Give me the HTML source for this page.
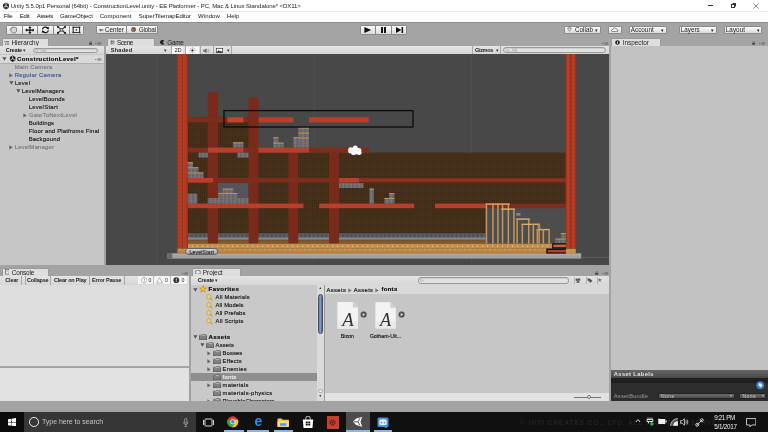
<!DOCTYPE html>
<html><head><meta charset="utf-8"><title>Unity</title>
<style>
html,body{margin:0;padding:0;background:#a2a2a2;overflow:hidden}
#root{filter:opacity(1);position:relative;width:768px;height:432px;overflow:hidden;background:#a3a3a3;font-family:"Liberation Sans",sans-serif}
#root div,#root span.t,#root svg{position:absolute;box-sizing:border-box}
#root span.t{white-space:nowrap;display:block}
</style></head><body><div id="root">
<div style="left:0px;top:0px;width:768px;height:21.6px;background:#fff;"></div>
<div style="left:0px;top:11.4px;width:768px;height:0.5px;background:#ececec;"></div>
<svg style="left:1.5px;top:1.8px" width="8" height="8" viewBox="0 0 16 16"><path d="M8 1 L14 4.5 V11.5 L8 15 L2 11.5 V4.5 Z" fill="#333"/><path d="M8 8 L8 2.5 M8 8 L13 10.8 M8 8 L3 10.8" stroke="#fff" stroke-width="1.6" fill="none"/></svg>
<span class="t" style="left:10.8px;top:2.50px;font-size:6px;line-height:7.20px;color:#222;font-weight:400;letter-spacing:-0.068px;">Unity 5.5.0p1 Personal (64bit) - ConstructionLevel.unity - EE Platformer - PC, Mac &amp; Linux Standalone* &lt;DX11&gt;</span>
<div style="left:708px;top:5.4px;width:5px;height:0.6px;background:#333;"></div>
<div style="left:730.5px;top:3.6px;width:4.2px;height:4.2px;background:transparent;border:0.6px solid #333"></div>
<div style="left:731.6px;top:2.8px;width:4.2px;height:4.2px;background:transparent;border:0.6px solid #333;border-left-color:transparent;border-bottom-color:transparent"></div>
<svg style="left:752.5px;top:2.6px" width="6" height="6" viewBox="0 0 6 6"><path d="M0.4 0.4 L5.6 5.6 M5.6 0.4 L0.4 5.6" stroke="#333" stroke-width="0.6"/></svg>
<span class="t" style="left:3.7px;top:13.00px;font-size:6px;line-height:7.20px;color:#111;font-weight:400;letter-spacing:-0.217px;">File</span>
<span class="t" style="left:19.7px;top:13.00px;font-size:6px;line-height:7.20px;color:#111;font-weight:400;letter-spacing:-0.085px;">Edit</span>
<span class="t" style="left:36.7px;top:13.00px;font-size:6px;line-height:7.20px;color:#111;font-weight:400;letter-spacing:-0.284px;">Assets</span>
<span class="t" style="left:60px;top:13.00px;font-size:6px;line-height:7.20px;color:#111;font-weight:400;letter-spacing:-0.088px;">GameObject</span>
<span class="t" style="left:99.7px;top:13.00px;font-size:6px;line-height:7.20px;color:#111;font-weight:400;letter-spacing:0.087px;">Component</span>
<span class="t" style="left:138.8px;top:13.00px;font-size:6px;line-height:7.20px;color:#111;font-weight:400;letter-spacing:-0.033px;">SuperTilemapEditor</span>
<span class="t" style="left:198px;top:13.00px;font-size:6px;line-height:7.20px;color:#111;font-weight:400;letter-spacing:0.110px;">Window</span>
<span class="t" style="left:226.8px;top:13.00px;font-size:6px;line-height:7.20px;color:#111;font-weight:400;letter-spacing:0.040px;">Help</span>
<div style="left:0px;top:21.6px;width:768px;height:24.6px;background:#a4a4a4;"></div>
<div style="left:0px;top:21.6px;width:768px;height:0.6px;background:#8e8e8e;"></div>
<div style="left:5.8px;top:25px;width:78.6px;height:9.6px;background:linear-gradient(#fbfbfb,#dcdcdc);border:0.5px solid #8a8a8a;border-radius:1.5px;"></div>
<div style="left:21.5px;top:25.4px;width:0.5px;height:8.8px;background:#8a8a8a;"></div>
<div style="left:37.199999999999996px;top:25.4px;width:0.5px;height:8.8px;background:#8a8a8a;"></div>
<div style="left:52.89999999999999px;top:25.4px;width:0.5px;height:8.8px;background:#8a8a8a;"></div>
<div style="left:68.6px;top:25.4px;width:0.5px;height:8.8px;background:#8a8a8a;"></div>
<svg style="left:9.2px;top:26px" width="9" height="8" viewBox="0 0 16 15"><path d="M3 8 C1 6 2 4.5 4 6 L4.5 3 C5 1.5 6.5 1.5 7 3 C7.5 1 9.5 1 10 3 C10.8 1.8 12.3 2 12.5 3.5 C13.5 3 14.5 4 14 6 L13 11 C12 14 5 14 4 11 Z" fill="#d8d8d8" stroke="#666" stroke-width="1.5"/></svg>
<svg style="left:24.6px;top:25.9px" width="9.8" height="8.2" viewBox="0 0 12 10"><path d="M6 0 L8 2.4 H6.7 V4.3 H9.4 V3 L12 5 L9.4 7 V5.7 H6.7 V7.6 H8 L6 10 L4 7.6 H5.3 V5.7 H2.6 V7 L0 5 L2.6 3 V4.3 H5.3 V2.4 H4 Z" fill="#111"/></svg>
<svg style="left:41px;top:26.1px" width="8.8" height="7.8" viewBox="0 0 12 10"><path d="M2 4.2 A4 3.4 0 0 1 9.2 2.6" fill="none" stroke="#111" stroke-width="1.7"/><path d="M10.8 0.6 L10.6 4.4 L7.2 3.2 Z" fill="#111"/><path d="M10 5.8 A4 3.4 0 0 1 2.8 7.4" fill="none" stroke="#111" stroke-width="1.7"/><path d="M1.2 9.4 L1.4 5.6 L4.8 6.8 Z" fill="#111"/></svg>
<svg style="left:56.6px;top:26.1px" width="9" height="7.8" viewBox="0 0 12 10"><rect x="4.2" y="3.4" width="3.6" height="3.2" fill="none" stroke="#111" stroke-width="1"/><path d="M0.5 0.5 L3.8 3 M11.5 0.5 L8.2 3 M0.5 9.5 L3.8 7 M11.5 9.5 L8.2 7" stroke="#111" stroke-width="1.4"/><path d="M0 0 H3 L0 2.4 Z M12 0 H9 L12 2.4 Z M0 10 H3 L0 7.6 Z M12 10 H9 L12 7.6 Z" fill="#111"/></svg>
<svg style="left:72.4px;top:26.1px" width="8.8" height="7.8" viewBox="0 0 12 10"><rect x="1.6" y="1.4" width="8.8" height="7.2" fill="none" stroke="#222" stroke-width="1.1"/><path d="M0 1.4 H12 M0 8.6 H12 M1.6 0 V10 M10.4 0 V10" stroke="#222" stroke-width="0.7"/><circle cx="6" cy="5" r="1.1" fill="#444"/></svg>
<div style="left:95.8px;top:25.2px;width:31.2px;height:8.8px;background:linear-gradient(#fbfbfb,#dcdcdc);border:0.5px solid #8a8a8a;border-radius:1.5px;border-radius:1.5px 0 0 1.5px"></div>
<div style="left:127px;top:25.2px;width:30.8px;height:8.8px;background:linear-gradient(#fbfbfb,#dcdcdc);border:0.5px solid #8a8a8a;border-radius:1.5px;border-radius:0 1.5px 1.5px 0;border-left:none"></div>
<svg style="left:99.4px;top:27.6px" width="4.4" height="4" viewBox="0 0 10 9"><path d="M0 4.5 L5 1 V3.2 H10 V5.8 H5 V8 Z" fill="#555"/></svg>
<span class="t" style="left:105px;top:26.12px;font-size:6.3px;line-height:7.56px;color:#222;font-weight:400;letter-spacing:-0.018px;">Center</span>
<svg style="left:131px;top:27.2px" width="5" height="5" viewBox="0 0 10 10"><circle cx="5" cy="5" r="4.4" fill="#8c5a32" stroke="#444" stroke-width="1"/><path d="M2 3 Q5 5 4 8" stroke="#d8a060" fill="none" stroke-width="1.4"/></svg>
<span class="t" style="left:138.8px;top:26.12px;font-size:6.3px;line-height:7.56px;color:#222;font-weight:400;letter-spacing:-0.235px;">Global</span>
<div style="left:359.7px;top:24.6px;width:47px;height:10px;background:linear-gradient(#fbfbfb,#dcdcdc);border:0.5px solid #8a8a8a;border-radius:1.5px;"></div>
<div style="left:375.3px;top:25px;width:0.5px;height:9px;background:#8a8a8a;"></div>
<div style="left:391px;top:25px;width:0.5px;height:9px;background:#8a8a8a;"></div>
<svg style="left:363.6px;top:26.6px" width="8" height="6" viewBox="0 0 8 6"><path d="M0.4 0 L7.2 3 L0.4 6 Z" fill="#111"/></svg>
<div style="left:381px;top:26.8px;width:1.5px;height:5.8px;background:#111;"></div>
<div style="left:384px;top:26.8px;width:1.5px;height:5.8px;background:#111;"></div>
<svg style="left:395.6px;top:26.6px" width="8" height="6" viewBox="0 0 8 6"><path d="M0 0 L5.4 3 L0 6 Z" fill="#111"/><rect x="5.6" y="0" width="1.5" height="6" fill="#111"/></svg>
<div style="left:563.7px;top:26px;width:37.3px;height:7.6px;background:linear-gradient(#fbfbfb,#dcdcdc);border:0.5px solid #8a8a8a;border-radius:1.5px;"></div>
<svg style="left:567px;top:27.4px" width="5" height="4.6" viewBox="0 0 10 9"><path d="M1 3 L3 0.6 H7 L9 3 L5 8.6 Z" fill="none" stroke="#666" stroke-width="1.2"/><path d="M1 3 H9" stroke="#666" stroke-width="1"/></svg>
<span class="t" style="left:575px;top:26.12px;font-size:6.3px;line-height:7.56px;color:#222;font-weight:400;letter-spacing:0.023px;">Collab</span>
<span class="t" style="left:595.4px;top:26.50px;font-size:5px;line-height:6.00px;color:#222;font-weight:400;">▾</span>
<div style="left:607.7px;top:26px;width:14.8px;height:7.6px;background:linear-gradient(#fbfbfb,#dcdcdc);border:0.5px solid #8a8a8a;border-radius:1.5px;"></div>
<svg style="left:611px;top:26.8px" width="8.2" height="5.6" viewBox="0 0 17 10.4"><path d="M4 9 C0 9 0 4.6 3.6 4.6 C3.6 1 9 0 10.4 3.4 C14 2.4 16 9 12.6 9 Z" fill="#f4f4f4" stroke="#444" stroke-width="1.3"/></svg>
<div style="left:628.5px;top:26px;width:38.5px;height:7.6px;background:linear-gradient(#fbfbfb,#dcdcdc);border:0.5px solid #8a8a8a;border-radius:1.5px;"></div>
<span class="t" style="left:630.8px;top:26.12px;font-size:6.3px;line-height:7.56px;color:#222;font-weight:400;letter-spacing:0.019px;">Account</span>
<span class="t" style="left:661.2px;top:26.50px;font-size:5px;line-height:6.00px;color:#222;font-weight:400;">▾</span>
<div style="left:678.5px;top:26px;width:38.5px;height:7.6px;background:linear-gradient(#fbfbfb,#dcdcdc);border:0.5px solid #8a8a8a;border-radius:1.5px;"></div>
<span class="t" style="left:680.8px;top:26.12px;font-size:6.3px;line-height:7.56px;color:#222;font-weight:400;letter-spacing:-0.002px;">Layers</span>
<span class="t" style="left:711.4px;top:26.50px;font-size:5px;line-height:6.00px;color:#222;font-weight:400;">▾</span>
<div style="left:723.5px;top:26px;width:38.5px;height:7.6px;background:linear-gradient(#fbfbfb,#dcdcdc);border:0.5px solid #8a8a8a;border-radius:1.5px;"></div>
<span class="t" style="left:725.8px;top:26.12px;font-size:6.3px;line-height:7.56px;color:#222;font-weight:400;letter-spacing:0.047px;">Layout</span>
<span class="t" style="left:756.6px;top:26.50px;font-size:5px;line-height:6.00px;color:#222;font-weight:400;">▾</span>
<div style="left:1.5px;top:38px;width:47.5px;height:8.4px;background:#dedede;border-radius:1.5px 1.5px 0 0;border:0.5px solid #9a9a9a;border-bottom:none"></div>
<svg style="left:3.6px;top:40.6px" width="5" height="4" viewBox="0 0 10 8"><path d="M0 1 H2 M3.4 1 H10 M2 3.8 H4 M5 3.8 H10 M2 6.6 H4 M5 6.6 H10" stroke="#444" stroke-width="1.2"/></svg>
<span class="t" style="left:11.5px;top:38.86px;font-size:6.4px;line-height:7.68px;color:#222;font-weight:400;letter-spacing:0.002px;">Hierarchy</span>
<svg style="left:89px;top:41px" width="3.4" height="4" viewBox="0 0 7 8"><path d="M1.6 3.6 V2.2 A1.9 1.9 0 0 1 5.4 2.2 V3.6" fill="none" stroke="#555" stroke-width="1"/><rect x="0.4" y="3.6" width="6.2" height="4" fill="#444"/></svg>
<svg style="left:95.2px;top:42.2px" width="6.4" height="3" viewBox="0 0 13 6"><path d="M0 2 H3.4 L1.7 4.2 Z" fill="#444"/><path d="M5 0.6 H13 M5 3 H13 M5 5.4 H13" stroke="#555" stroke-width="1"/></svg>
<div style="left:106.5px;top:38px;width:48.5px;height:8.4px;background:#dedede;border-radius:1.5px 1.5px 0 0;border:0.5px solid #9a9a9a;border-bottom:none"></div>
<svg style="left:110px;top:40.4px" width="4.6" height="4.6" viewBox="0 0 9 9"><path d="M3 0 V9 M6 0 V9 M0 3 H9 M0 6 H9" stroke="#555" stroke-width="1"/></svg>
<span class="t" style="left:117px;top:38.86px;font-size:6.4px;line-height:7.68px;color:#222;font-weight:400;letter-spacing:-0.429px;">Scene</span>
<svg style="left:160px;top:40.4px" width="4.6" height="4.6" viewBox="0 0 9 9"><path d="M4.5 4.5 L8.4 2.2 A4.4 4.4 0 1 0 8.4 6.8 Z" fill="#222"/></svg>
<span class="t" style="left:167.2px;top:38.86px;font-size:6.4px;line-height:7.68px;color:#222;font-weight:400;letter-spacing:-0.257px;">Game</span>
<svg style="left:601.6px;top:42.2px" width="6.4" height="3" viewBox="0 0 13 6"><path d="M0 2 H3.4 L1.7 4.2 Z" fill="#444"/><path d="M5 0.6 H13 M5 3 H13 M5 5.4 H13" stroke="#555" stroke-width="1"/></svg>
<div style="left:611px;top:38px;width:49.5px;height:8.4px;background:#dedede;border-radius:1.5px 1.5px 0 0;border:0.5px solid #9a9a9a;border-bottom:none"></div>
<svg style="left:615px;top:39.8px" width="5" height="5" viewBox="0 0 10 10"><circle cx="5" cy="5" r="4.6" fill="#222"/><rect x="4.2" y="4" width="1.6" height="3.8" fill="#fff"/><circle cx="5" cy="2.6" r="0.9" fill="#fff"/></svg>
<span class="t" style="left:622.8px;top:38.86px;font-size:6.4px;line-height:7.68px;color:#222;font-weight:400;letter-spacing:-0.014px;">Inspector</span>
<svg style="left:752px;top:41px" width="3.4" height="4" viewBox="0 0 7 8"><path d="M1.6 3.6 V2.2 A1.9 1.9 0 0 1 5.4 2.2 V3.6" fill="none" stroke="#555" stroke-width="1"/><rect x="0.4" y="3.6" width="6.2" height="4" fill="#444"/></svg>
<svg style="left:758.8px;top:42.2px" width="6.4" height="3" viewBox="0 0 13 6"><path d="M0 2 H3.4 L1.7 4.2 Z" fill="#444"/><path d="M5 0.6 H13 M5 3 H13 M5 5.4 H13" stroke="#555" stroke-width="1"/></svg>
<div style="left:0px;top:46.2px;width:103.6px;height:8px;background:linear-gradient(#e4e4e4,#d6d6d6);"></div>
<span class="t" style="left:5.8px;top:46.84px;font-size:5.6px;line-height:6.72px;color:#222;font-weight:700;letter-spacing:-0.205px;">Create</span>
<span class="t" style="left:23.4px;top:47.70px;font-size:4.5px;line-height:5.40px;color:#333;font-weight:400;">▾</span>
<div style="left:32.5px;top:47.5px;width:65px;height:5.8px;background:#e2e2e2;border:0.5px solid #999;border-radius:3px;box-shadow:inset 0 0.5px 0.5px #bbb"></div>
<svg style="left:34.9px;top:48.9px" width="4.6" height="3.6" viewBox="0 0 9 7"><circle cx="2.6" cy="2.6" r="1.9" fill="none" stroke="#999" stroke-width="0.9"/><path d="M4 4 L5.6 6" stroke="#999" stroke-width="0.9"/><path d="M6.2 2.4 H8.8 L7.5 4 Z" fill="#999"/></svg>
<span class="t" style="left:40.4px;top:47.16px;font-size:5.4px;line-height:6.48px;color:#a8a8a8;font-weight:400;">All</span>
<div style="left:105.6px;top:46.2px;width:503px;height:8px;background:linear-gradient(#e4e4e4,#d6d6d6);"></div>
<span class="t" style="left:110.8px;top:46.84px;font-size:5.6px;line-height:6.72px;color:#222;font-weight:700;letter-spacing:0.212px;">Shaded</span>
<span class="t" style="left:163.6px;top:47.70px;font-size:4.5px;line-height:5.40px;color:#333;font-weight:400;">▾</span>
<div style="left:170.6px;top:46.2px;width:0.5px;height:8px;background:#aaa;"></div>
<div style="left:172px;top:46.6px;width:11.4px;height:7.4px;background:#fbfbfb;"></div>
<span class="t" style="left:174.6px;top:46.82px;font-size:5.8px;line-height:6.96px;color:#222;font-weight:400;letter-spacing:-0.407px;">2D</span>
<div style="left:184.6px;top:46.2px;width:0.5px;height:8px;background:#aaa;"></div>
<div style="left:186px;top:46.6px;width:13px;height:7.4px;background:#f6f6f6;"></div>
<svg style="left:189.2px;top:47px" width="6.8" height="6.8" viewBox="0 0 12 12"><circle cx="6" cy="6" r="1.9" fill="#333"/><path d="M6 0.4 V2.8 M6 9.2 V11.6 M0.4 6 H2.8 M9.2 6 H11.6 M2 2 L3.7 3.7 M8.3 8.3 L10 10 M2 10 L3.7 8.3 M8.3 3.7 L10 2" stroke="#666" stroke-width="0.9"/></svg>
<div style="left:200.4px;top:46.2px;width:0.5px;height:8px;background:#aaa;"></div>
<svg style="left:203px;top:47.6px" width="7" height="5.6" viewBox="0 0 14 11"><path d="M0.6 3.6 H3.4 L7 0.6 V10.4 L3.4 7.4 H0.6 Z" fill="#666"/><path d="M9 3 Q10.6 5.5 9 8 M10.8 1.4 Q13.4 5.5 10.8 9.6" fill="none" stroke="#888" stroke-width="1.1"/></svg>
<div style="left:213px;top:46.2px;width:0.5px;height:8px;background:#aaa;"></div>
<svg style="left:216.2px;top:47.8px" width="7" height="5" viewBox="0 0 14 10"><rect x="0.6" y="0.6" width="12.8" height="8.8" fill="#fff" stroke="#222" stroke-width="1.2"/><path d="M1.2 9 L5 4.4 L8 7 L10 5.4 L12.8 9 Z" fill="#222"/></svg>
<span class="t" style="left:226.6px;top:47.70px;font-size:4.5px;line-height:5.40px;color:#333;font-weight:400;">▾</span>
<div style="left:231.4px;top:46.2px;width:0.5px;height:8px;background:#aaa;"></div>
<div style="left:471.6px;top:46.2px;width:0.5px;height:8px;background:#aaa;"></div>
<span class="t" style="left:475px;top:46.84px;font-size:5.6px;line-height:6.72px;color:#222;font-weight:700;letter-spacing:-0.371px;">Gizmos</span>
<span class="t" style="left:495.6px;top:47.70px;font-size:4.5px;line-height:5.40px;color:#333;font-weight:400;">▾</span>
<div style="left:500.4px;top:46.2px;width:0.5px;height:8px;background:#aaa;"></div>
<div style="left:503.4px;top:47.4px;width:102.2px;height:5.8px;background:#e2e2e2;border:0.5px solid #999;border-radius:3px;box-shadow:inset 0 0.5px 0.5px #bbb"></div>
<svg style="left:505.79999999999995px;top:48.8px" width="4.6" height="3.6" viewBox="0 0 9 7"><circle cx="2.6" cy="2.6" r="1.9" fill="none" stroke="#999" stroke-width="0.9"/><path d="M4 4 L5.6 6" stroke="#999" stroke-width="0.9"/><path d="M6.2 2.4 H8.8 L7.5 4 Z" fill="#999"/></svg>
<span class="t" style="left:511.4px;top:47.16px;font-size:5.4px;line-height:6.48px;color:#a8a8a8;font-weight:400;">All</span>
<div style="left:0px;top:54.2px;width:103.6px;height:211.2px;background:#c6c6c6;"></div>
<div style="left:0px;top:54.6px;width:103.6px;height:8.6px;background:#d9d9d9;"></div>
<div style="left:0px;top:63.2px;width:103.6px;height:0.5px;background:#b0b0b0;"></div>
<svg style="left:2.0px;top:57px" width="4.8" height="4" viewBox="0 0 8 7"><path d="M0.4 0.6 H7.6 L4 6.6 Z" fill="#555"/></svg>
<svg style="left:8.6px;top:55.4px" width="7.4" height="7.4" viewBox="0 0 16 16"><path d="M8 1 L14 4.5 V11.5 L8 15 L2 11.5 V4.5 Z" fill="#222"/><path d="M8 8 L8 2.5 M8 8 L13 10.8 M8 8 L3 10.8" stroke="#e8e8e8" stroke-width="1.7" fill="none"/></svg>
<span class="t" style="left:17px;top:55.60px;font-size:6px;line-height:7.20px;color:#080808;font-weight:700;letter-spacing:0.377px;-webkit-text-stroke:0.15px #080808;">ConstructionLevel*</span>
<svg style="left:95.4px;top:57.6px" width="6.4" height="3" viewBox="0 0 13 6"><path d="M0 2 H3.4 L1.7 4.2 Z" fill="#444"/><path d="M5 0.6 H13 M5 3 H13 M5 5.4 H13" stroke="#555" stroke-width="1"/></svg>
<span class="t" style="left:14.7px;top:63.66px;font-size:5.9px;line-height:7.08px;color:#777;font-weight:400;letter-spacing:0.235px;-webkit-text-stroke:0.12px #777;">Main Camera</span>
<span class="t" style="left:14.7px;top:71.66px;font-size:5.9px;line-height:7.08px;color:#35558f;font-weight:400;letter-spacing:0.265px;-webkit-text-stroke:0.12px #35558f;">Regular Camera</span>
<svg style="left:9.200000000000001px;top:72.8px" width="4" height="4.8" viewBox="0 0 7 8"><path d="M0.6 0.4 V7.6 L6.6 4 Z" fill="#666"/></svg>
<span class="t" style="left:14.7px;top:79.66px;font-size:5.9px;line-height:7.08px;color:#111;font-weight:400;letter-spacing:0.299px;-webkit-text-stroke:0.12px #111;">Level</span>
<svg style="left:9.0px;top:81.2px" width="4.8" height="4" viewBox="0 0 8 7"><path d="M0.4 0.6 H7.6 L4 6.6 Z" fill="#555"/></svg>
<span class="t" style="left:21.7px;top:87.66px;font-size:5.9px;line-height:7.08px;color:#111;font-weight:400;letter-spacing:0.181px;-webkit-text-stroke:0.12px #111;">LevelManagers</span>
<svg style="left:15.999999999999998px;top:89.2px" width="4.8" height="4" viewBox="0 0 8 7"><path d="M0.4 0.6 H7.6 L4 6.6 Z" fill="#555"/></svg>
<span class="t" style="left:28.7px;top:95.66px;font-size:5.9px;line-height:7.08px;color:#111;font-weight:400;letter-spacing:0.199px;-webkit-text-stroke:0.12px #111;">LevelBounds</span>
<span class="t" style="left:28.7px;top:103.66px;font-size:5.9px;line-height:7.08px;color:#111;font-weight:400;letter-spacing:0.284px;-webkit-text-stroke:0.12px #111;">LevelStart</span>
<span class="t" style="left:29px;top:111.66px;font-size:5.9px;line-height:7.08px;color:#777;font-weight:400;letter-spacing:0.196px;-webkit-text-stroke:0.12px #777;">GateToNextLevel</span>
<svg style="left:23.400000000000002px;top:112.8px" width="4" height="4.8" viewBox="0 0 7 8"><path d="M0.6 0.4 V7.6 L6.6 4 Z" fill="#666"/></svg>
<span class="t" style="left:28.7px;top:119.66px;font-size:5.9px;line-height:7.08px;color:#111;font-weight:400;letter-spacing:0.184px;-webkit-text-stroke:0.12px #111;">Buildings</span>
<span class="t" style="left:28.7px;top:127.66px;font-size:5.9px;line-height:7.08px;color:#111;font-weight:400;letter-spacing:0.196px;-webkit-text-stroke:0.12px #111;">Floor and Platfroms Final</span>
<span class="t" style="left:28.7px;top:135.66px;font-size:5.9px;line-height:7.08px;color:#111;font-weight:400;letter-spacing:0.231px;-webkit-text-stroke:0.12px #111;">Backgound</span>
<span class="t" style="left:14.7px;top:143.66px;font-size:5.9px;line-height:7.08px;color:#777;font-weight:400;letter-spacing:0.167px;-webkit-text-stroke:0.12px #777;">LevelManager</span>
<svg style="left:9.200000000000001px;top:144.79999999999998px" width="4" height="4.8" viewBox="0 0 7 8"><path d="M0.6 0.4 V7.6 L6.6 4 Z" fill="#666"/></svg>
<svg style="left:105.6px;top:54.4px;background:#484848" width="503" height="211" viewBox="0 0 503 211"><defs>
<pattern id="pw" width="2" height="2" patternUnits="userSpaceOnUse"><rect width="2" height="2" fill="#452e19"/><rect width="1" height="1" fill="#3e2915"/><rect x="1" y="1" width="1" height="1" fill="#4a321c"/></pattern>
<pattern id="pr" width="5" height="4" patternUnits="userSpaceOnUse"><rect width="5" height="4" fill="#b03a22"/><path d="M1.6 0.6 L2.6 2 L1.6 3.4" stroke="#c24a2e" stroke-width="0.8" fill="none"/></pattern>
<pattern id="pf" width="5" height="5" patternUnits="userSpaceOnUse"><rect width="5" height="5" fill="#c48c4c"/><rect width="1.2" height="1.2" x="1" y="1.6" fill="#ecd060"/><rect width="5" height="0.6" y="4.4" fill="#a8743a"/></pattern>
<pattern id="pf2" width="5" height="5.2" patternUnits="userSpaceOnUse"><rect width="5" height="5.2" fill="#c08848"/><rect width="1" height="1" x="3.4" y="2.6" fill="#e4c058"/><rect width="5" height="0.6" y="0" fill="#a8743a"/></pattern>
<pattern id="pgb" x="0" y="179.4" width="4.2" height="6.8" patternUnits="userSpaceOnUse"><rect width="4.2" height="6.8" fill="#5e626a"/><rect x="0.6" y="0.8" width="2.6" height="2.8" rx="1" fill="#484c54"/><rect y="4.4" width="4.2" height="1.4" fill="#8c8e94"/><rect y="5.8" width="4.2" height="1" fill="#6c6c70"/></pattern>
<pattern id="pg" width="4" height="2.6" patternUnits="userSpaceOnUse"><rect width="4" height="2.6" fill="#6c6c70"/><rect width="1.6" height="1" x="0.4" y="0.4" fill="#808084"/><rect width="1.4" height="0.9" x="2.3" y="1.5" fill="#58585c"/></pattern>
</defs><rect x="50.20" y="0.00" width="0.50" height="211.00" fill="#7a7468" opacity="0.35"/><rect x="207.80" y="0.00" width="0.50" height="211.00" fill="#7a7468" opacity="0.35"/><rect x="365.20" y="0.00" width="0.50" height="211.00" fill="#7a7468" opacity="0.35"/><rect x="81.70" y="63.10" width="60.90" height="123.50" fill="url(#pw)" /><rect x="142.60" y="98.60" width="317.80" height="88.00" fill="url(#pw)" /><rect x="112.00" y="128.60" width="30.60" height="21.00" fill="#535559" /><rect x="379.70" y="154.00" width="80.70" height="35.60" fill="#4d4d4d" /><rect x="61.40" y="199.60" width="413.80" height="5.00" fill="#a2a2a2" /><rect x="61.40" y="199.60" width="5.00" height="5.00" fill="#6a6a6a" /><rect x="66.40" y="199.60" width="408.80" height="1.00" fill="#b4b4b4" /><rect x="475.20" y="202.80" width="27.80" height="1.20" fill="#5c5c5c" /><rect x="81.70" y="179.40" width="298.00" height="6.80" fill="url(#pgb)" /><rect x="81.70" y="186.20" width="298.00" height="3.40" fill="#80582e" /><rect x="81.70" y="189.60" width="364.70" height="5.00" fill="url(#pf)" /><rect x="71.40" y="194.40" width="369.00" height="5.20" fill="url(#pf2)" /><rect x="459.90" y="194.60" width="9.90" height="5.00" fill="#c89050" /><rect x="101.70" y="38.30" width="10.30" height="150.90" fill="#7a2a1b" /><rect x="142.60" y="43.60" width="9.80" height="145.60" fill="#7a2a1b" /><rect x="182.40" y="98.60" width="9.80" height="90.60" fill="#7a2a1b" /><rect x="223.00" y="98.60" width="10.00" height="90.60" fill="#7a2a1b" /><rect x="81.70" y="63.20" width="60.90" height="5.20" fill="#7e2c1c" /><rect x="121.40" y="63.20" width="16.00" height="5.20" fill="#c0472b" /><rect x="152.60" y="63.20" width="34.80" height="5.20" fill="#b8402a" /><rect x="203.00" y="63.20" width="59.80" height="5.20" fill="#b8402a" /><rect x="81.70" y="93.60" width="181.70" height="5.00" fill="#7e2c1c" /><rect x="101.90" y="93.60" width="35.50" height="5.00" fill="#b8402a" /><rect x="152.40" y="93.60" width="50.60" height="5.00" fill="#b8402a" /><rect x="81.70" y="124.00" width="378.70" height="4.60" fill="#7e2c1c" /><rect x="253.00" y="125.60" width="207.40" height="1.40" fill="#963424" /><rect x="81.70" y="124.00" width="25.30" height="4.60" fill="#b8402a" /><rect x="233.00" y="124.00" width="20.00" height="4.60" fill="#b8402a" /><rect x="81.70" y="149.60" width="115.70" height="4.60" fill="#b8402a" /><rect x="213.20" y="149.60" width="95.00" height="4.60" fill="#b8402a" /><rect x="329.00" y="149.60" width="51.40" height="4.60" fill="#b8402a" /><rect x="380.40" y="149.60" width="80.00" height="4.60" fill="#7e2c1c" /><rect x="71.40" y="0.00" width="10.30" height="194.40" fill="url(#pr)" /><rect x="76.10" y="0.00" width="1.00" height="194.40" fill="#8e2e1c" /><rect x="71.40" y="0.00" width="0.80" height="194.40" fill="#8e2e1c" /><rect x="80.90" y="0.00" width="0.80" height="194.40" fill="#8e2e1c" /><rect x="459.70" y="0.00" width="10.40" height="194.60" fill="url(#pr)" /><rect x="464.40" y="0.00" width="1.00" height="194.60" fill="#8e2e1c" /><rect x="459.70" y="0.00" width="0.80" height="194.60" fill="#8e2e1c" /><rect x="469.30" y="0.00" width="0.80" height="194.60" fill="#8e2e1c" /><rect x="126.90" y="88.30" width="10.50" height="5.30" fill="url(#pg)" /><rect x="126.90" y="88.30" width="10.50" height="1.00" fill="#b8935c" /><rect x="92.60" y="98.60" width="9.30" height="5.00" fill="url(#pg)" /><rect x="131.40" y="98.60" width="11.20" height="5.00" fill="url(#pg)" /><rect x="81.70" y="108.20" width="5.30" height="5.00" fill="url(#pg)" /><rect x="81.70" y="108.20" width="5.30" height="1.00" fill="#b8935c" /><rect x="81.70" y="113.20" width="10.70" height="5.20" fill="url(#pg)" /><rect x="81.70" y="113.20" width="10.70" height="1.00" fill="#b8935c" /><rect x="81.70" y="118.40" width="15.70" height="5.60" fill="url(#pg)" /><rect x="81.70" y="118.40" width="15.70" height="1.00" fill="#b8935c" /><rect x="167.40" y="83.20" width="5.00" height="10.40" fill="url(#pg)" /><rect x="167.40" y="83.20" width="5.00" height="1.00" fill="#b8935c" /><rect x="167.40" y="88.60" width="10.20" height="5.00" fill="url(#pg)" /><rect x="167.40" y="88.60" width="10.20" height="1.00" fill="#b8935c" /><rect x="187.40" y="83.20" width="5.00" height="10.40" fill="url(#pg)" /><rect x="187.40" y="83.20" width="5.00" height="1.00" fill="#b8935c" /><rect x="192.40" y="73.60" width="10.60" height="20.00" fill="url(#pg)" /><rect x="192.40" y="73.60" width="10.60" height="1.00" fill="#b8935c" /><rect x="192.40" y="78.60" width="10.60" height="1.00" fill="#b8935c" /><rect x="192.40" y="83.60" width="10.60" height="1.00" fill="#b8935c" /><rect x="192.40" y="88.60" width="10.60" height="1.00" fill="#a85c30" /><rect x="81.70" y="139.60" width="9.70" height="10.00" fill="url(#pg)" /><rect x="101.70" y="144.00" width="40.90" height="5.60" fill="url(#pg)" /><rect x="112.40" y="139.00" width="19.00" height="5.00" fill="url(#pg)" /><rect x="112.40" y="139.00" width="19.00" height="1.00" fill="#b8935c" /><rect x="116.80" y="134.60" width="10.50" height="4.40" fill="url(#pg)" /><rect x="116.80" y="134.60" width="10.50" height="1.00" fill="#b8935c" /><rect x="233.00" y="129.00" width="24.40" height="5.00" fill="url(#pg)" /><rect x="263.40" y="134.60" width="4.60" height="15.00" fill="url(#pg)" /><rect x="263.40" y="134.60" width="4.60" height="1.00" fill="#b8935c" /><rect x="278.40" y="144.00" width="10.00" height="5.60" fill="url(#pg)" /><rect x="278.40" y="144.00" width="10.00" height="1.00" fill="#b8935c" /><rect x="283.00" y="139.00" width="5.40" height="5.00" fill="url(#pg)" /><rect x="283.00" y="139.00" width="5.40" height="1.00" fill="#b8935c" /><rect x="379.70" y="149.40" width="24.10" height="1.40" fill="#dcae6c" /><rect x="379.70" y="149.60" width="1.50" height="40.00" fill="#c89458" /><rect x="386.20" y="149.60" width="1.50" height="40.00" fill="#c89458" /><rect x="391.20" y="149.60" width="1.50" height="40.00" fill="#c89458" /><rect x="395.80" y="149.60" width="1.50" height="40.00" fill="#c89458" /><rect x="401.60" y="149.60" width="1.50" height="40.00" fill="#c89458" /><rect x="395.30" y="154.40" width="13.70" height="1.40" fill="#dcae6c" /><rect x="407.20" y="154.60" width="1.50" height="35.00" fill="#c89458" /><rect x="410.30" y="164.40" width="13.50" height="1.40" fill="#dcae6c" /><rect x="410.40" y="164.60" width="1.50" height="25.00" fill="#c89458" /><rect x="422.00" y="164.60" width="1.50" height="25.00" fill="#c89458" /><rect x="415.40" y="169.60" width="18.50" height="1.40" fill="#dcae6c" /><rect x="415.60" y="170.00" width="1.50" height="19.60" fill="#c89458" /><rect x="426.60" y="170.00" width="1.50" height="19.60" fill="#c89458" /><rect x="432.40" y="170.00" width="1.50" height="19.60" fill="#c89458" /><rect x="430.60" y="174.90" width="13.40" height="1.40" fill="#dcae6c" /><rect x="430.60" y="175.20" width="1.50" height="14.40" fill="#c89458" /><rect x="436.60" y="175.20" width="1.50" height="14.40" fill="#c89458" /><rect x="442.40" y="175.20" width="1.50" height="14.40" fill="#c89458" /><rect x="410.40" y="159.00" width="4.00" height="2.60" fill="#8a8a8a" /><rect x="431.40" y="171.20" width="3.00" height="2.80" fill="#8a8a8a" /><rect x="454.80" y="179.00" width="5.10" height="5.60" fill="url(#pg)" /><rect x="454.80" y="179.00" width="5.10" height="1.00" fill="#b8935c" /><rect x="449.40" y="184.60" width="10.50" height="4.60" fill="url(#pg)" /><rect x="449.40" y="184.60" width="10.50" height="1.00" fill="#b8935c" /><rect x="446.10" y="189.20" width="13.80" height="5.40" fill="#1c1410" /><rect x="447.40" y="190.60" width="12.50" height="2.60" fill="#d2603a" /><rect x="440.40" y="194.60" width="19.50" height="5.00" fill="#1c1410" /><rect x="441.80" y="196.00" width="18.10" height="2.40" fill="#b8402a" /><path d="M242.4 97.1 c-1.2 -3.6 3 -4.6 4 -3 c0.6 -3.6 5.6 -3.4 5.4 0 c2.6 -0.6 4.4 1.4 3.4 3.4 c2 3 -3 4.6 -4.2 2.6 c-2.6 1.6 -6 1.2 -6 -0.8 c-2 0.4 -3.6 -0.8 -2.6 -2.2 z" fill="#fafafa"/><rect x="118.00" y="56.60" width="189.00" height="16.40" fill="none" stroke="#0c0c0c" stroke-width="1.3"/></svg>
<div style="left:185.4px;top:248.4px;width:32.8px;height:6.4px;background:linear-gradient(#d4d4d4,#a4a4a4);border-radius:3px;border:0.5px solid #666"></div>
<span class="t" style="left:189.6px;top:248.60px;font-size:5px;line-height:6.00px;color:#2a2a2a;font-weight:400;letter-spacing:0.209px;-webkit-text-stroke:0.15px #2a2a2a;">LevelStart</span>
<div style="left:611px;top:46.2px;width:157px;height:355px;background:#c2c2c2;"></div>
<div style="left:611px;top:369.8px;width:157px;height:8.2px;background:linear-gradient(#666,#484848);"></div>
<span class="t" style="left:613.8px;top:370.52px;font-size:5.8px;line-height:6.96px;color:#e6e6e6;font-weight:700;letter-spacing:0.351px;">Asset Labels</span>
<div style="left:611px;top:378px;width:157px;height:23.2px;background:#2d2d2d;"></div>
<div style="left:611px;top:378px;width:157px;height:4.6px;background:#1f1f1f;"></div>
<svg style="left:756px;top:381px" width="8.6" height="8.6" viewBox="0 0 10 10"><circle cx="5" cy="5" r="4.6" fill="#3b7fd0"/><path d="M3 2.6 H5.4 L7.8 5 L5.4 7.6 L3 5.2 Z" fill="#e8f0fa"/></svg>
<span class="t" style="left:613.8px;top:392.72px;font-size:5.8px;line-height:6.96px;color:#9a9a9a;font-weight:400;letter-spacing:0.167px;">AssetBundle</span>
<div style="left:657.6px;top:392.6px;width:77.2px;height:6.6px;background:linear-gradient(#6a6a6a,#4e4e4e);border:0.5px solid #222;border-radius:1.5px"></div>
<span class="t" style="left:661px;top:392.90px;font-size:5px;line-height:6.00px;color:#c8c8c8;font-weight:400;letter-spacing:0.412px;">None</span>
<span class="t" style="left:730.4px;top:393.84px;font-size:3.6px;line-height:4.32px;color:#bbb;font-weight:400;">▾</span>
<div style="left:738.6px;top:392.6px;width:27.6px;height:6.6px;background:linear-gradient(#6a6a6a,#4e4e4e);border:0.5px solid #222;border-radius:1.5px"></div>
<span class="t" style="left:742.6px;top:392.90px;font-size:5px;line-height:6.00px;color:#c8c8c8;font-weight:400;letter-spacing:0.412px;">None</span>
<span class="t" style="left:761.6px;top:393.84px;font-size:3.6px;line-height:4.32px;color:#bbb;font-weight:400;">▾</span>
<div style="left:1.5px;top:267.6px;width:47.5px;height:8.4px;background:#dedede;border-radius:1.5px 1.5px 0 0;border:0.5px solid #9a9a9a;border-bottom:none"></div>
<svg style="left:4.6px;top:269.4px" width="4.4" height="5.4" viewBox="0 0 9 11"><rect x="0.6" y="0.6" width="7.8" height="9.8" fill="#eee" stroke="#444" stroke-width="1.1"/><path d="M2.4 3.4 H6.6 M2.4 5.6 H6.6" stroke="#888" stroke-width="0.8"/></svg>
<span class="t" style="left:11.8px;top:268.56px;font-size:6.4px;line-height:7.68px;color:#222;font-weight:400;letter-spacing:-0.154px;">Console</span>
<svg style="left:181.6px;top:272.2px" width="6.4" height="3" viewBox="0 0 13 6"><path d="M0 2 H3.4 L1.7 4.2 Z" fill="#444"/><path d="M5 0.6 H13 M5 3 H13 M5 5.4 H13" stroke="#555" stroke-width="1"/></svg>
<div style="left:0px;top:276px;width:189.4px;height:9px;background:linear-gradient(#e4e4e4,#d6d6d6);"></div>
<span class="t" style="left:5.2px;top:277.20px;font-size:5.5px;line-height:6.60px;color:#222;font-weight:700;letter-spacing:-0.112px;">Clear</span>
<span class="t" style="left:27px;top:277.20px;font-size:5.5px;line-height:6.60px;color:#222;font-weight:700;letter-spacing:-0.190px;">Collapse</span>
<span class="t" style="left:54px;top:277.20px;font-size:5.5px;line-height:6.60px;color:#222;font-weight:700;letter-spacing:-0.188px;">Clear on Play</span>
<span class="t" style="left:92px;top:277.20px;font-size:5.5px;line-height:6.60px;color:#222;font-weight:700;letter-spacing:-0.180px;">Error Pause</span>
<div style="left:21.4px;top:276px;width:0.5px;height:8.6px;background:#a8a8a8;"></div>
<div style="left:25.4px;top:276px;width:0.5px;height:8.6px;background:#a8a8a8;"></div>
<div style="left:50.4px;top:276px;width:0.5px;height:8.6px;background:#a8a8a8;"></div>
<div style="left:88.6px;top:276px;width:0.5px;height:8.6px;background:#a8a8a8;"></div>
<div style="left:124.4px;top:276px;width:0.5px;height:8.6px;background:#a8a8a8;"></div>
<div style="left:137.6px;top:276.4px;width:49px;height:8px;background:#f4f4f4;"></div>
<div style="left:153.4px;top:276.4px;width:0.5px;height:7.8px;background:#bbb;"></div>
<div style="left:169.6px;top:276.4px;width:0.5px;height:7.8px;background:#bbb;"></div>
<svg style="left:140.6px;top:277.4px" width="6.4" height="6.4" viewBox="0 0 12 12"><path d="M6 0.8 A5.2 5.2 0 1 0 6.01 0.8 Z" fill="#fff" stroke="#777" stroke-width="1"/><rect x="5.3" y="2.8" width="1.4" height="4" fill="#666"/><rect x="5.3" y="7.8" width="1.4" height="1.4" fill="#666"/></svg>
<span class="t" style="left:148.4px;top:277.48px;font-size:5.2px;line-height:6.24px;color:#333;font-weight:400;">0</span>
<svg style="left:156px;top:277.2px" width="7" height="6.6" viewBox="0 0 13 12"><path d="M6.5 1 L12 11 H1 Z" fill="#f6f6f6" stroke="#888" stroke-width="1"/></svg>
<span class="t" style="left:165px;top:277.48px;font-size:5.2px;line-height:6.24px;color:#333;font-weight:400;">0</span>
<svg style="left:173.4px;top:277.3px" width="6.6" height="6.4" viewBox="0 0 12 12"><circle cx="6" cy="6" r="5.4" fill="#333"/><rect x="5.2" y="2.6" width="1.6" height="4.2" fill="#eee"/><rect x="5.2" y="7.8" width="1.6" height="1.6" fill="#eee"/></svg>
<span class="t" style="left:181.6px;top:277.48px;font-size:5.2px;line-height:6.24px;color:#333;font-weight:400;">0</span>
<div style="left:0px;top:284.5px;width:189.4px;height:0.6px;background:#9c9c9c;"></div>
<div style="left:0px;top:285px;width:189.4px;height:116px;background:#dedede;"></div>
<div style="left:0px;top:366px;width:189.4px;height:1.6px;background:#a6a6a6;"></div>
<div style="left:0px;top:367.6px;width:189.4px;height:33.4px;background:#e2e2e2;"></div>
<div style="left:191.6px;top:267.6px;width:49px;height:8.4px;background:#dedede;border-radius:1.5px 1.5px 0 0;border:0.5px solid #9a9a9a;border-bottom:none"></div>
<svg style="left:195px;top:270px" width="5.6" height="4.4" viewBox="0 0 11 9"><path d="M0.6 8.4 V1.8 H3.6 L4.6 0.6 H8 V1.8 H10.4 V8.4 Z" fill="#e8e8e8" stroke="#444" stroke-width="1.1"/></svg>
<span class="t" style="left:202.8px;top:268.56px;font-size:6.4px;line-height:7.68px;color:#222;font-weight:400;letter-spacing:-0.017px;">Project</span>
<svg style="left:595.2px;top:270.8px" width="3.4" height="4" viewBox="0 0 7 8"><path d="M1.6 3.6 V2.2 A1.9 1.9 0 0 1 5.4 2.2 V3.6" fill="none" stroke="#555" stroke-width="1"/><rect x="0.4" y="3.6" width="6.2" height="4" fill="#444"/></svg>
<svg style="left:602px;top:272.0px" width="6.4" height="3" viewBox="0 0 13 6"><path d="M0 2 H3.4 L1.7 4.2 Z" fill="#444"/><path d="M5 0.6 H13 M5 3 H13 M5 5.4 H13" stroke="#555" stroke-width="1"/></svg>
<div style="left:191px;top:276px;width:418px;height:9px;background:linear-gradient(#e4e4e4,#d6d6d6);"></div>
<span class="t" style="left:197.8px;top:277.20px;font-size:5.5px;line-height:6.60px;color:#222;font-weight:700;letter-spacing:-0.153px;">Create</span>
<span class="t" style="left:215.4px;top:278.00px;font-size:4.5px;line-height:5.40px;color:#333;font-weight:400;">▾</span>
<div style="left:418px;top:277.4px;width:150.8px;height:6.6px;background:#e2e2e2;border:0.5px solid #999;border-radius:3px;box-shadow:inset 0 0.5px 0.5px #bbb"></div>
<svg style="left:420.4px;top:278.79999999999995px" width="4.6" height="3.6" viewBox="0 0 9 7"><circle cx="2.6" cy="2.6" r="1.9" fill="none" stroke="#999" stroke-width="0.9"/><path d="M4 4 L5.6 6" stroke="#999" stroke-width="0.9"/><path d="M6.2 2.4 H8.8 L7.5 4 Z" fill="#999"/></svg>
<div style="left:573.8000000000001px;top:276.8px;width:0.5px;height:7px;background:#b4b4b4;"></div>
<div style="left:585.6px;top:276.8px;width:0.5px;height:7px;background:#b4b4b4;"></div>
<div style="left:596.8000000000001px;top:276.8px;width:0.5px;height:7px;background:#b4b4b4;"></div>
<svg style="left:575.4px;top:277.8px" width="6" height="5" viewBox="0 0 12 10"><circle cx="3.4" cy="3.6" r="2.4" fill="#555"/><rect x="5.4" y="1" width="5" height="4.4" fill="#555"/><path d="M2 9.4 L6 4.6 L10 9.4 Z" fill="#555"/></svg>
<svg style="left:587.2px;top:277.8px" width="6" height="5" viewBox="0 0 12 10"><path d="M1 1 H5.6 L11 6 L7 9.6 L1 4.6 Z" fill="#555"/></svg>
<span class="t" style="left:597.4px;top:276.90px;font-size:6px;line-height:7.20px;color:#777;font-weight:400;">★</span>
<div style="left:191px;top:284.5px;width:418px;height:0.6px;background:#9c9c9c;"></div>
<div style="left:191px;top:285px;width:126.4px;height:116px;background:#c9c9c9;"></div>
<div style="left:317.4px;top:285px;width:6.6px;height:116px;background:#dadada;"></div>
<div style="left:324px;top:285px;width:1.2px;height:116px;background:#9a9a9a;"></div>
<div style="left:317.6px;top:294.4px;width:5.4px;height:40px;background:linear-gradient(90deg,#6c7890,#7fa4d6 45%,#6c8cc0 60%,#56627c);border-radius:2.7px;border:0.6px solid #48505f"></div>
<span class="t" style="left:318.4px;top:286.44px;font-size:3.6px;line-height:4.32px;color:#333;font-weight:400;">▲</span>
<span class="t" style="left:318.4px;top:394.44px;font-size:3.6px;line-height:4.32px;color:#333;font-weight:400;">▼</span>
<div style="left:317.8px;top:389.4px;width:5.6px;height:3.4px;background:#f2f2f2;border-radius:2px;border:0.5px solid #aaa"></div>
<div style="left:325.2px;top:285px;width:283.8px;height:116px;background:#c6c6c6;"></div>
<div style="left:325.2px;top:285px;width:283.8px;height:9px;background:#d9d9d9;"></div>
<div style="left:325.2px;top:393px;width:283.8px;height:8px;background:#e2e2e2;"></div>
<div style="left:573.6px;top:397px;width:27.6px;height:0.8px;background:#777;"></div>
<div style="left:587.4px;top:395px;width:4px;height:4px;background:radial-gradient(#fff,#ccc);border-radius:2px;border:0.5px solid #777"></div>
<span class="t" style="left:326.6px;top:286.52px;font-size:5.8px;line-height:6.96px;color:#222;font-weight:400;letter-spacing:0.366px;-webkit-text-stroke:0.2px #222;">Assets</span>
<svg style="left:348.2px;top:287.8px" width="4" height="4.8" viewBox="0 0 7 8"><path d="M0.6 0.4 V7.6 L6.6 4 Z" fill="#777"/></svg>
<span class="t" style="left:353.8px;top:286.52px;font-size:5.8px;line-height:6.96px;color:#222;font-weight:400;letter-spacing:0.366px;-webkit-text-stroke:0.2px #222;">Assets</span>
<svg style="left:375.40000000000003px;top:287.8px" width="4" height="4.8" viewBox="0 0 7 8"><path d="M0.6 0.4 V7.6 L6.6 4 Z" fill="#777"/></svg>
<span class="t" style="left:381.4px;top:286.46px;font-size:5.9px;line-height:7.08px;color:#080808;font-weight:700;letter-spacing:0.356px;-webkit-text-stroke:0.2px #080808;">fonts</span>
<svg style="left:193.2px;top:287.6px" width="4.8" height="4" viewBox="0 0 8 7"><path d="M0.4 0.6 H7.6 L4 6.6 Z" fill="#555"/></svg>
<span class="t" style="left:198.6px;top:284.00px;font-size:9px;line-height:10.80px;color:#f6cc2e;font-weight:400;-webkit-text-stroke:0.5px #b58a1c;">★</span>
<span class="t" style="left:208.6px;top:286.40px;font-size:6px;line-height:7.20px;color:#080808;font-weight:700;letter-spacing:0.458px;-webkit-text-stroke:0.2px #080808;">Favorites</span>
<svg style="left:206.2px;top:294.40000000000003px" width="7" height="6.6" viewBox="0 0 14 13"><circle cx="5.6" cy="5.4" r="4.1" fill="#d4d4d0" stroke="#dcb42a" stroke-width="2.3"/><path d="M8.8 8.8 L12.4 12" stroke="#d4a820" stroke-width="2.6" stroke-linecap="round"/></svg>
<span class="t" style="left:215.6px;top:294.12px;font-size:5.8px;line-height:6.96px;color:#111;font-weight:400;letter-spacing:0.201px;-webkit-text-stroke:0.14px #111;">All Materials</span>
<svg style="left:206.2px;top:302.40000000000003px" width="7" height="6.6" viewBox="0 0 14 13"><circle cx="5.6" cy="5.4" r="4.1" fill="#d4d4d0" stroke="#dcb42a" stroke-width="2.3"/><path d="M8.8 8.8 L12.4 12" stroke="#d4a820" stroke-width="2.6" stroke-linecap="round"/></svg>
<span class="t" style="left:215.6px;top:302.12px;font-size:5.8px;line-height:6.96px;color:#111;font-weight:400;letter-spacing:0.125px;-webkit-text-stroke:0.14px #111;">All Models</span>
<svg style="left:206.2px;top:310.40000000000003px" width="7" height="6.6" viewBox="0 0 14 13"><circle cx="5.6" cy="5.4" r="4.1" fill="#d4d4d0" stroke="#dcb42a" stroke-width="2.3"/><path d="M8.8 8.8 L12.4 12" stroke="#d4a820" stroke-width="2.6" stroke-linecap="round"/></svg>
<span class="t" style="left:215.6px;top:310.12px;font-size:5.8px;line-height:6.96px;color:#111;font-weight:400;letter-spacing:0.178px;-webkit-text-stroke:0.14px #111;">All Prefabs</span>
<svg style="left:206.2px;top:318.40000000000003px" width="7" height="6.6" viewBox="0 0 14 13"><circle cx="5.6" cy="5.4" r="4.1" fill="#d4d4d0" stroke="#dcb42a" stroke-width="2.3"/><path d="M8.8 8.8 L12.4 12" stroke="#d4a820" stroke-width="2.6" stroke-linecap="round"/></svg>
<span class="t" style="left:215.6px;top:318.12px;font-size:5.8px;line-height:6.96px;color:#111;font-weight:400;letter-spacing:0.202px;-webkit-text-stroke:0.14px #111;">All Scripts</span>
<svg style="left:193.2px;top:335px" width="4.8" height="4" viewBox="0 0 8 7"><path d="M0.4 0.6 H7.6 L4 6.6 Z" fill="#555"/></svg>
<svg style="left:199.1px;top:333.8px" width="8" height="6.4" viewBox="0 0 14 11"><path d="M0.6 10.4 V2 H5 L6.2 0.6 H11 V2 H13.4 V10.4 Z" fill="#b4b4b4" stroke="#484848" stroke-width="1"/><path d="M0.6 4.2 H13.4 V10.4 H0.6 Z" fill="#7a7a7a" stroke="#484848" stroke-width="0.8"/><path d="M1.4 5 H12.6" stroke="#a8a8a8" stroke-width="0.9"/></svg>
<span class="t" style="left:208.6px;top:333.90px;font-size:6px;line-height:7.20px;color:#080808;font-weight:700;letter-spacing:0.387px;-webkit-text-stroke:0.2px #080808;">Assets</span>
<svg style="left:200.2px;top:343px" width="4.8" height="4" viewBox="0 0 8 7"><path d="M0.4 0.6 H7.6 L4 6.6 Z" fill="#555"/></svg>
<svg style="left:206.1px;top:341.8px" width="8" height="6.4" viewBox="0 0 14 11"><path d="M0.6 10.4 V2 H5 L6.2 0.6 H11 V2 H13.4 V10.4 Z" fill="#b4b4b4" stroke="#484848" stroke-width="1"/><path d="M0.6 4.2 H13.4 V10.4 H0.6 Z" fill="#7a7a7a" stroke="#484848" stroke-width="0.8"/><path d="M1.4 5 H12.6" stroke="#a8a8a8" stroke-width="0.9"/></svg>
<span class="t" style="left:215.6px;top:341.52px;font-size:5.8px;line-height:6.96px;color:#111;font-weight:400;letter-spacing:0.166px;-webkit-text-stroke:0.14px #111;">Assets</span>
<div style="left:191px;top:373px;width:126.4px;height:8px;background:#8f8f8f;"></div>
<svg style="left:207.4px;top:350.6px" width="4" height="4.8" viewBox="0 0 7 8"><path d="M0.6 0.4 V7.6 L6.6 4 Z" fill="#666"/></svg>
<svg style="left:213.29999999999998px;top:349.8px" width="8" height="6.4" viewBox="0 0 14 11"><path d="M0.6 10.4 V2 H5 L6.2 0.6 H11 V2 H13.4 V10.4 Z" fill="#b4b4b4" stroke="#484848" stroke-width="1"/><path d="M0.6 4.2 H13.4 V10.4 H0.6 Z" fill="#7a7a7a" stroke="#484848" stroke-width="0.8"/><path d="M1.4 5 H12.6" stroke="#a8a8a8" stroke-width="0.9"/></svg>
<span class="t" style="left:222.6px;top:349.52px;font-size:5.8px;line-height:6.96px;color:#111;font-weight:400;letter-spacing:0.130px;-webkit-text-stroke:0.14px #111;">Bosses</span>
<svg style="left:207.4px;top:358.6px" width="4" height="4.8" viewBox="0 0 7 8"><path d="M0.6 0.4 V7.6 L6.6 4 Z" fill="#666"/></svg>
<svg style="left:213.29999999999998px;top:357.8px" width="8" height="6.4" viewBox="0 0 14 11"><path d="M0.6 10.4 V2 H5 L6.2 0.6 H11 V2 H13.4 V10.4 Z" fill="#b4b4b4" stroke="#484848" stroke-width="1"/><path d="M0.6 4.2 H13.4 V10.4 H0.6 Z" fill="#7a7a7a" stroke="#484848" stroke-width="0.8"/><path d="M1.4 5 H12.6" stroke="#a8a8a8" stroke-width="0.9"/></svg>
<span class="t" style="left:222.6px;top:357.52px;font-size:5.8px;line-height:6.96px;color:#111;font-weight:400;letter-spacing:0.254px;-webkit-text-stroke:0.14px #111;">Effects</span>
<svg style="left:207.4px;top:366.6px" width="4" height="4.8" viewBox="0 0 7 8"><path d="M0.6 0.4 V7.6 L6.6 4 Z" fill="#666"/></svg>
<svg style="left:213.29999999999998px;top:365.8px" width="8" height="6.4" viewBox="0 0 14 11"><path d="M0.6 10.4 V2 H5 L6.2 0.6 H11 V2 H13.4 V10.4 Z" fill="#b4b4b4" stroke="#484848" stroke-width="1"/><path d="M0.6 4.2 H13.4 V10.4 H0.6 Z" fill="#7a7a7a" stroke="#484848" stroke-width="0.8"/><path d="M1.4 5 H12.6" stroke="#a8a8a8" stroke-width="0.9"/></svg>
<span class="t" style="left:222.6px;top:365.52px;font-size:5.8px;line-height:6.96px;color:#111;font-weight:400;letter-spacing:0.233px;-webkit-text-stroke:0.14px #111;">Enemies</span>
<svg style="left:213.29999999999998px;top:373.8px" width="8" height="6.4" viewBox="0 0 14 11"><path d="M0.6 10.4 V2 H5 L6.2 0.6 H11 V2 H13.4 V10.4 Z" fill="#b4b4b4" stroke="#484848" stroke-width="1"/><path d="M0.6 4.2 H13.4 V10.4 H0.6 Z" fill="#7a7a7a" stroke="#484848" stroke-width="0.8"/><path d="M1.4 5 H12.6" stroke="#a8a8a8" stroke-width="0.9"/></svg>
<span class="t" style="left:222.6px;top:373.52px;font-size:5.8px;line-height:6.96px;color:#f4f4f4;font-weight:400;letter-spacing:0.245px;-webkit-text-stroke:0.14px #f4f4f4;">fonts</span>
<svg style="left:207.4px;top:382.6px" width="4" height="4.8" viewBox="0 0 7 8"><path d="M0.6 0.4 V7.6 L6.6 4 Z" fill="#666"/></svg>
<svg style="left:213.29999999999998px;top:381.8px" width="8" height="6.4" viewBox="0 0 14 11"><path d="M0.6 10.4 V2 H5 L6.2 0.6 H11 V2 H13.4 V10.4 Z" fill="#b4b4b4" stroke="#484848" stroke-width="1"/><path d="M0.6 4.2 H13.4 V10.4 H0.6 Z" fill="#7a7a7a" stroke="#484848" stroke-width="0.8"/><path d="M1.4 5 H12.6" stroke="#a8a8a8" stroke-width="0.9"/></svg>
<span class="t" style="left:222.6px;top:381.52px;font-size:5.8px;line-height:6.96px;color:#111;font-weight:400;letter-spacing:0.275px;-webkit-text-stroke:0.14px #111;">materials</span>
<svg style="left:213.29999999999998px;top:389.8px" width="8" height="6.4" viewBox="0 0 14 11"><path d="M0.6 10.4 V2 H5 L6.2 0.6 H11 V2 H13.4 V10.4 Z" fill="#b4b4b4" stroke="#484848" stroke-width="1"/><path d="M0.6 4.2 H13.4 V10.4 H0.6 Z" fill="#7a7a7a" stroke="#484848" stroke-width="0.8"/><path d="M1.4 5 H12.6" stroke="#a8a8a8" stroke-width="0.9"/></svg>
<span class="t" style="left:222.6px;top:389.52px;font-size:5.8px;line-height:6.96px;color:#111;font-weight:400;letter-spacing:0.306px;-webkit-text-stroke:0.14px #111;">materials-physics</span>
<svg style="left:207.4px;top:398.6px" width="4" height="4.8" viewBox="0 0 7 8"><path d="M0.6 0.4 V7.6 L6.6 4 Z" fill="#666"/></svg>
<svg style="left:213.29999999999998px;top:397.8px" width="8" height="6.4" viewBox="0 0 14 11"><path d="M0.6 10.4 V2 H5 L6.2 0.6 H11 V2 H13.4 V10.4 Z" fill="#b4b4b4" stroke="#484848" stroke-width="1"/><path d="M0.6 4.2 H13.4 V10.4 H0.6 Z" fill="#7a7a7a" stroke="#484848" stroke-width="0.8"/><path d="M1.4 5 H12.6" stroke="#a8a8a8" stroke-width="0.9"/></svg>
<span class="t" style="left:222.6px;top:397.52px;font-size:5.8px;line-height:6.96px;color:#111;font-weight:400;letter-spacing:0.077px;-webkit-text-stroke:0.14px #111;">PlayableCharacters</span>
<svg style="left:336.7px;top:300.8px" width="21.8" height="28.8" viewBox="0 0 22 28"><path d="M0.4 0.4 H16 L21.6 6 V27.6 H0.4 Z" fill="#f3f3f3"/><path d="M16 0.4 V6 H21.6 Z" fill="#cfcfcf"/><rect x="0.4" y="20" width="21.2" height="7.6" fill="#e2e2e2" opacity="0.6"/><text x="11" y="24.8" text-anchor="middle" font-family="Liberation Serif,serif" font-style="italic" font-size="19" fill="#333">A</text></svg>
<svg style="left:374.8px;top:300.8px" width="21.2" height="28.8" viewBox="0 0 22 28"><path d="M0.4 0.4 H16 L21.6 6 V27.6 H0.4 Z" fill="#f3f3f3"/><path d="M16 0.4 V6 H21.6 Z" fill="#cfcfcf"/><rect x="0.4" y="20" width="21.2" height="7.6" fill="#e2e2e2" opacity="0.6"/><text x="11" y="24.8" text-anchor="middle" font-family="Liberation Serif,serif" font-style="italic" font-size="19" fill="#333">A</text></svg>
<svg style="left:360.09999999999997px;top:311.2px" width="7.2" height="7.2" viewBox="0 0 14 14"><circle cx="7" cy="7" r="6.6" fill="#b0b0b0"/><circle cx="7" cy="7" r="5.8" fill="#505050"/><path d="M5.2 4 L10.2 7 L5.2 10 Z" fill="#dcdcdc"/></svg>
<svg style="left:397.59999999999997px;top:311.2px" width="7.2" height="7.2" viewBox="0 0 14 14"><circle cx="7" cy="7" r="6.6" fill="#b0b0b0"/><circle cx="7" cy="7" r="5.8" fill="#505050"/><path d="M5.2 4 L10.2 7 L5.2 10 Z" fill="#dcdcdc"/></svg>
<span class="t" style="left:247.39999999999998px;width:200px;text-align:center;top:332.62px;font-size:5.3px;line-height:6.36px;color:#111;font-weight:400;-webkit-text-stroke:0.14px #111;">Bizon</span>
<span class="t" style="left:285.5px;width:200px;text-align:center;top:332.62px;font-size:5.3px;line-height:6.36px;color:#111;font-weight:400;-webkit-text-stroke:0.14px #111;">Gotham-Ult...</span>
<div style="left:0px;top:401px;width:768px;height:11px;background:#a3a3a3;"></div>
<div style="left:0px;top:412px;width:768px;height:20px;background:#101010;"></div>
<div style="left:0px;top:412px;width:24px;height:20px;background:#0a0a0a;"></div>
<div style="left:24px;top:412px;width:171.6px;height:20px;background:#363636;"></div>
<svg style="left:7.8px;top:417.8px" width="8.4" height="8.4" viewBox="0 0 16 16"><path d="M0 2.2 L6.6 1.3 V7.6 H0 Z M7.4 1.2 L16 0 V7.6 H7.4 Z M0 8.4 H6.6 V14.7 L0 13.8 Z M7.4 8.4 H16 V16 L7.4 14.8 Z" fill="#fff"/></svg>
<div style="left:29.2px;top:417.2px;width:9.8px;height:9.8px;background:transparent;border:1.4px solid #f2f2f2;border-radius:50%"></div>
<span class="t" style="left:42px;top:418.00px;font-size:7px;line-height:8.40px;color:#c4c4c4;font-weight:400;letter-spacing:-0.046px;">Type here to search</span>
<svg style="left:183px;top:417.6px" width="5.6" height="9" viewBox="0 0 10 16"><rect x="3" y="0.6" width="4" height="8.6" rx="2" fill="none" stroke="#bbb" stroke-width="1.2"/><path d="M1 7 Q1 11.6 5 11.6 Q9 11.6 9 7 M5 11.6 V15 M2.6 15.2 H7.4" fill="none" stroke="#bbb" stroke-width="1.1"/></svg>
<svg style="left:203px;top:417.6px" width="11" height="9" viewBox="0 0 22 18"><rect x="4" y="2" width="14" height="14" rx="1" fill="none" stroke="#eee" stroke-width="1.8"/><path d="M1 4 V14 M21 4 V14" stroke="#eee" stroke-width="1.8"/></svg>
<svg style="left:227.4px;top:416.4px" width="11.6" height="11.6" viewBox="0 0 24 24"><circle cx="12" cy="12" r="11.4" fill="#e33b2e"/><path d="M12 12 L1.6 7 A11.4 11.4 0 0 0 10 23.2 L16 14 Z" fill="#2da94f"/><path d="M12 12 L16.6 14.6 L10.2 23.3 A11.4 11.4 0 0 0 22.6 8 H12 Z" fill="#fcc31e"/><circle cx="12" cy="12" r="5.2" fill="#fff"/><circle cx="12" cy="12" r="4" fill="#4a8af4"/></svg>
<span class="t" style="left:158.39999999999998px;width:200px;text-align:center;top:413.20px;font-size:14px;line-height:16.80px;color:#2f8fe8;font-weight:700;font-family:'Liberation Sans',sans-serif;">e</span>
<svg style="left:277px;top:416.8px" width="12.4" height="10.4" viewBox="0 0 24 20"><path d="M1 3 H9 L11 5.4 H23 V19 H1 Z" fill="#f6c64a"/><path d="M1 8 H23 V19 H1 Z" fill="#fbdc7c"/><rect x="6" y="12" width="12" height="5" fill="#4aa0e8"/></svg>
<svg style="left:302px;top:415.6px" width="12" height="12.4" viewBox="0 0 24 25"><path d="M7.6 7 V4.6 A4.4 4.4 0 0 1 16.4 4.6 V7" fill="none" stroke="#fff" stroke-width="1.6"/><path d="M1.4 7 H22.6 L21 24 H3 Z" fill="#fff"/><path d="M7.4 11 H11.4 V14.6 H7.4 Z M12.4 11 H16.6 V14.6 H12.4 Z M7.4 15.6 H11.4 V19.4 H7.4 Z M12.4 15.6 H16.6 V19.4 H12.4 Z" fill="#111"/></svg>
<div style="left:326.6px;top:416px;width:12.6px;height:12.6px;background:#c8402c;"></div>
<svg style="left:329.4px;top:418.8px" width="7" height="7" viewBox="0 0 14 14"><circle cx="7" cy="7" r="5" fill="none" stroke="#3a2220" stroke-width="2.4" stroke-dasharray="2.6 1.3"/><circle cx="7" cy="7" r="2.2" fill="#3a2220"/></svg>
<div style="left:345.8px;top:412px;width:24.4px;height:20px;background:#4c4c4c;"></div>
<svg style="left:352.4px;top:416.4px" width="11.6" height="11.6" viewBox="0 0 24 24"><path d="M2 12 L8.6 5.2 L21 2 L17.6 12 L21 22 L8.6 18.8 Z" fill="#fff"/><path d="M12.4 12 H3.6 M12.4 12 L16.6 4.6 M12.4 12 L16.6 19.4" stroke="#4c4c4c" stroke-width="2"/></svg>
<svg style="left:376.6px;top:416.6px" width="12" height="11.6" viewBox="0 0 24 23"><rect x="1" y="1" width="22" height="19" rx="3" fill="#4a90e2"/><path d="M14 20 L20 23 V18 Z" fill="#4a90e2"/><path d="M5 6 Q12 3 19 6 L19.6 15 Q12 18 4.4 15 Z" fill="#e8f0fb"/><circle cx="9" cy="11" r="1.7" fill="#4a90e2"/><circle cx="15" cy="11" r="1.7" fill="#4a90e2"/></svg>
<div style="left:224px;top:430.2px;width:20px;height:1.8px;background:#86b8ea;"></div>
<div style="left:247px;top:430.2px;width:22px;height:1.8px;background:#86b8ea;"></div>
<div style="left:274px;top:430.2px;width:19px;height:1.8px;background:#86b8ea;"></div>
<div style="left:346px;top:430.2px;width:24px;height:1.8px;background:#86b8ea;"></div>
<div style="left:374px;top:430.2px;width:18px;height:1.8px;background:#86b8ea;"></div>
<span class="t" style="left:520px;top:418.64px;font-size:6.6px;line-height:7.92px;color:#242424;font-weight:700;letter-spacing:0.925px;">© INTI CREATES CO., LTD. ALL RIGHTS RESERVED.</span>
<span class="t" style="left:537.6px;width:200px;text-align:center;top:417.20px;font-size:8px;line-height:9.60px;color:#eee;font-weight:400;transform:scaleX(1.3);">^</span>
<svg style="left:646px;top:417.4px" width="8.4" height="9" viewBox="0 0 17 18"><path d="M4 1 V5 M8 1 V5 M12 1 V5 M2 5 H14 V9 H2 Z M5 9 V13 M11 9 V13" stroke="#fff" stroke-width="1.6" fill="none"/><circle cx="12" cy="14" r="3.6" fill="#29b34a"/></svg>
<svg style="left:657.6px;top:418.4px" width="9" height="7" viewBox="0 0 18 14"><rect x="0.6" y="2" width="14" height="10" fill="#eee"/><rect x="15" y="5" width="2.4" height="4" fill="#eee"/><path d="M2 0.6 V4" stroke="#eee" stroke-width="1.4"/></svg>
<svg style="left:669.6px;top:417.6px" width="8.4" height="8.4" viewBox="0 0 16 16"><path d="M15 15 V1 A14 14 0 0 0 1 15 Z" fill="#555"/><path d="M15 15 V6 A9 9 0 0 0 6 15 Z" fill="#eee"/><path d="M15 1 A14 14 0 0 0 1 15" fill="none" stroke="#ddd" stroke-width="1.4"/></svg>
<svg style="left:679.6px;top:418px" width="9" height="8" viewBox="0 0 18 16"><path d="M1 5.4 H4.6 L9 1.4 V14.6 L4.6 10.6 H1 Z" fill="none" stroke="#eee" stroke-width="1.4"/><path d="M11.6 5 Q13.6 8 11.6 11 M14 3 Q17.4 8 14 13" fill="none" stroke="#eee" stroke-width="1.3"/></svg>
<svg style="left:694.6px;top:417.6px" width="9" height="9" viewBox="0 0 18 18"><path d="M3 15 L15 3" stroke="#eee" stroke-width="1.6"/><circle cx="13.6" cy="4.4" r="3" fill="none" stroke="#eee" stroke-width="1.5"/><circle cx="4.4" cy="13.6" r="3" fill="none" stroke="#eee" stroke-width="1.5"/></svg>
<span class="t" style="left:714.2px;top:413.62px;font-size:6.3px;line-height:7.56px;color:#f0f0f0;font-weight:400;letter-spacing:-0.380px;">9:21 PM</span>
<span class="t" style="left:714.2px;top:422.82px;font-size:6.3px;line-height:7.56px;color:#f0f0f0;font-weight:400;letter-spacing:-0.240px;">5/1/2017</span>
<svg style="left:746px;top:417.6px" width="10.4" height="9.4" viewBox="0 0 20 18"><path d="M1 1 H19 V13.4 H11 L7.6 17 V13.4 H1 Z" fill="none" stroke="#f2f2f2" stroke-width="1.5"/></svg>
</div></body></html>
